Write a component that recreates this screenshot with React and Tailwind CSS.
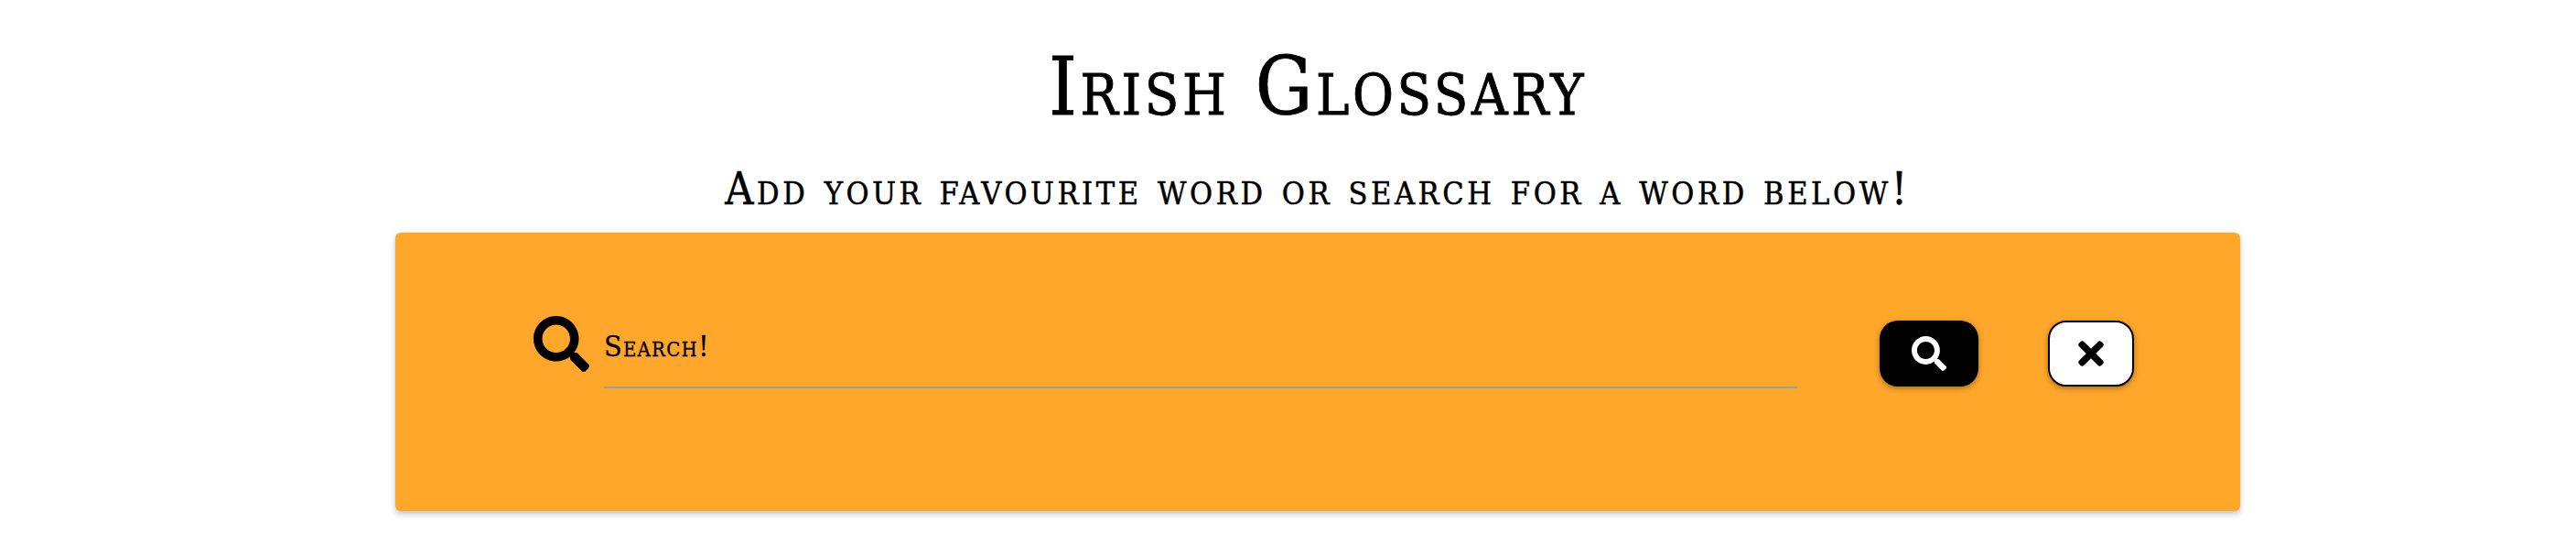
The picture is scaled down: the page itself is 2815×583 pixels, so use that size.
import React from "react";
import { FaSearch, FaTimes } from "react-icons/fa";

export default function App() {
  return (
    <div className="w-full h-[583px] overflow-hidden bg-white text-black font-['DejaVu_Serif',serif] [font-stretch:condensed]">
      <div className="ml-[432px] w-[2016px] flex flex-col items-center">
        <h1 className="mt-[47px] h-[96px] leading-[96px] text-[87px] [font-variant:small-caps] whitespace-nowrap tracking-[3.6px] font-normal [-webkit-text-stroke:0.8px_black]">
          Irish Glossary
        </h1>
        <h2 className="mt-[32px] h-[62px] leading-[62px] text-[48px] [font-variant:small-caps] whitespace-nowrap tracking-[3.6px] font-normal [-webkit-text-stroke:0.5px_black]">
          Add your favourite word or search for a word below!
        </h2>
        <div className="mt-[17px] w-full h-[304px] rounded-[6px] bg-[#ffa72b] shadow-[0_3px_6px_rgba(0,0,0,0.25)] pl-[151px] pr-[116px] pt-[91px]">
          <div className="flex items-start">
            <FaSearch className="w-[61px] h-[61px] shrink-0" />
            <div className="ml-[16px] w-[1304px] h-[79px] border-b-2 border-[#9e9e9e] pt-[14px] text-[32px] leading-[38px] [font-variant:small-caps] tracking-[1.2px] [-webkit-text-stroke:0.3px_black]">
              Search!
            </div>
            <button className="ml-[90px] mt-[5px] w-[108px] h-[72px] rounded-[20px] bg-black text-white flex items-center justify-center shadow-[0_2px_6px_rgba(0,0,0,0.35)]">
              <FaSearch className="w-[38px] h-[38px]" />
            </button>
            <button className="ml-[76px] mt-[5px] w-[94px] h-[72px] rounded-[20px] bg-white border-2 border-black text-black flex items-center justify-center shadow-[0_2px_6px_rgba(0,0,0,0.35)]">
              <FaTimes className="w-[32px] h-[40px]" />
            </button>
          </div>
        </div>
      </div>
    </div>
  );
}
